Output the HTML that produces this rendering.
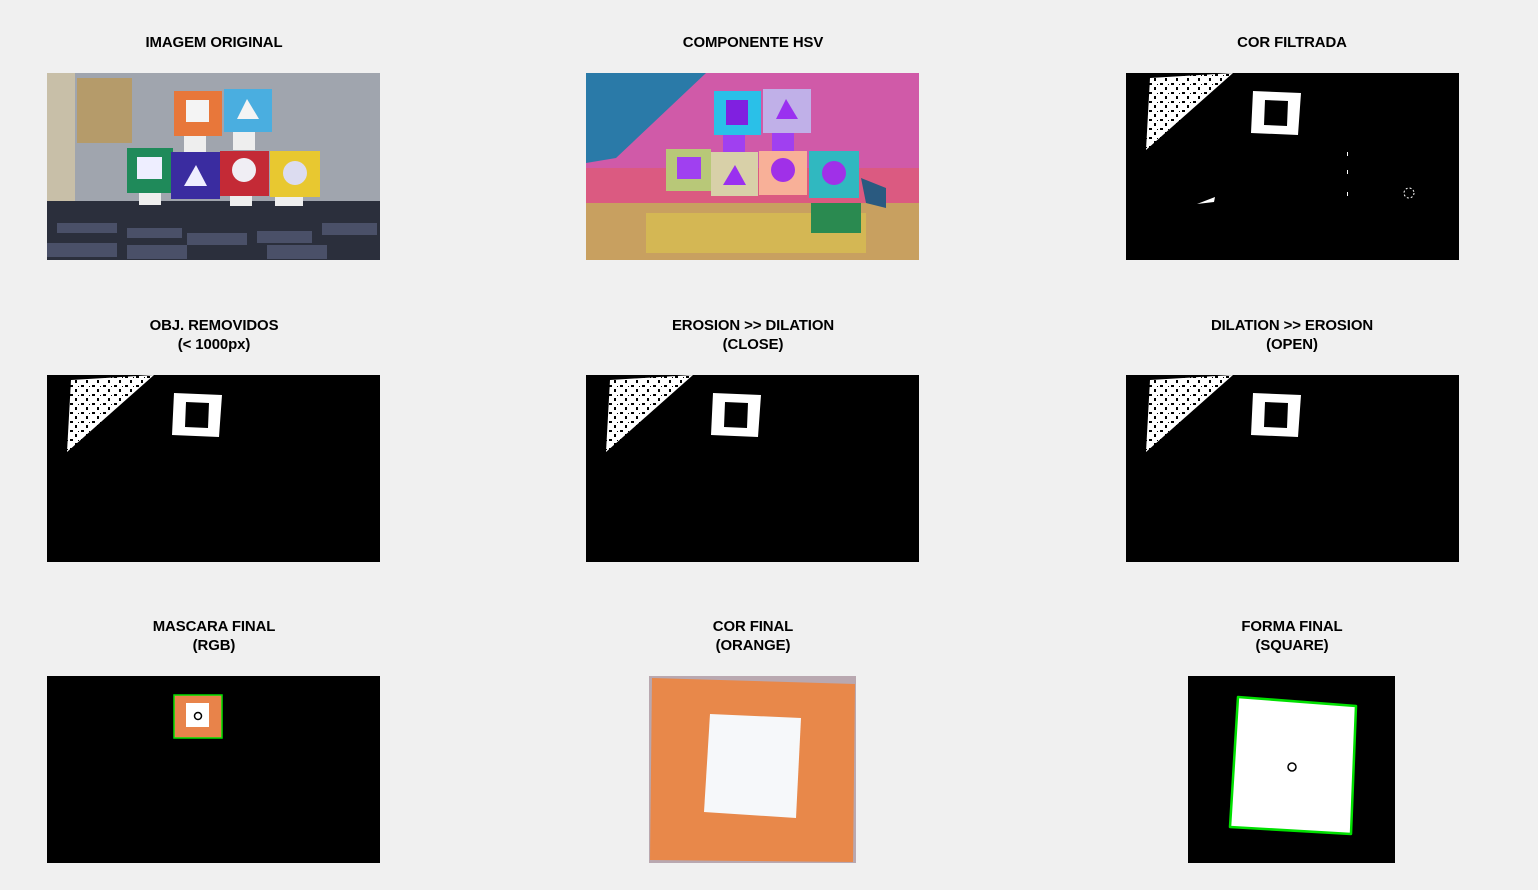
<!DOCTYPE html><html><head><meta charset="utf-8"><style>
body{margin:0;background:#f0f0f0;width:1538px;height:890px;overflow:hidden;position:relative;font-family:"Liberation Sans",Arial,sans-serif}
.t{position:absolute;width:400px;text-align:center;font-size:14.5px;font-weight:bold;color:#000;line-height:19px;letter-spacing:-0.1px;transform:scaleX(1.03)}
svg{position:absolute;left:0;top:0}
</style></head><body>
<div class="t" style="left:14px;top:34px">IMAGEM ORIGINAL</div>
<div class="t" style="left:553px;top:34px">COMPONENTE HSV</div>
<div class="t" style="left:1092px;top:34px">COR FILTRADA</div>
<div class="t" style="left:14px;top:317px">OBJ. REMOVIDOS<br>(&lt; 1000px)</div>
<div class="t" style="left:553px;top:317px">EROSION &gt;&gt; DILATION<br>(CLOSE)</div>
<div class="t" style="left:1092px;top:317px">DILATION &gt;&gt; EROSION<br>(OPEN)</div>
<div class="t" style="left:14px;top:618px">MASCARA FINAL<br>(RGB)</div>
<div class="t" style="left:553px;top:618px">COR FINAL<br>(ORANGE)</div>
<div class="t" style="left:1092px;top:618px">FORMA FINAL<br>(SQUARE)</div>
<svg width="1538" height="890">
<defs>
<pattern id="sp" width="11" height="9" patternUnits="userSpaceOnUse"><rect width="11" height="9" fill="#fff"/><rect x="1" y="1" width="3" height="2" fill="#000"/><rect x="6" y="5" width="2" height="3" fill="#000"/><rect x="9" y="2" width="1" height="1" fill="#000"/></pattern>
<g id="bin">
<rect width="333" height="187" fill="#000"/>
<polygon points="20,77 24,5 107,0" fill="url(#sp)"/>
<path d="M127,18 L175,20 L172,62 L125,60 Z M139,27 L162,28 L161,53 L138,52 Z" fill="#fff" fill-rule="evenodd"/>
</g>
</defs>
<g transform="translate(47,73)">
<rect width="333" height="187" fill="#a0a5ae"/>
<rect x="0" y="0" width="28" height="135" fill="#c8bfa8"/>
<rect x="30" y="5" width="55" height="65" fill="#b59b6a"/>
<rect x="0" y="128" width="333" height="59" fill="#2b2f3c"/>
<g fill="#4a5068"><rect x="10" y="150" width="60" height="10"/><rect x="80" y="155" width="55" height="10"/><rect x="140" y="160" width="60" height="12"/><rect x="210" y="158" width="55" height="12"/><rect x="275" y="150" width="55" height="12"/><rect x="0" y="170" width="70" height="14"/><rect x="80" y="172" width="60" height="14"/><rect x="220" y="172" width="60" height="14"/></g>
<rect x="127" y="18" width="48" height="45" fill="#e8773a"/><rect x="139" y="27" width="23" height="22" fill="#f4f4f4"/>
<rect x="177" y="16" width="48" height="43" fill="#4aaee0"/><polygon points="200,26 190,46 212,46" fill="#f4f4f4"/>
<rect x="137" y="63" width="22" height="16" fill="#eee"/><rect x="186" y="59" width="22" height="18" fill="#eee"/>
<rect x="80" y="75" width="46" height="45" fill="#1f8a5a"/><rect x="90" y="84" width="25" height="22" fill="#eef"/>
<rect x="124" y="79" width="49" height="47" fill="#3a2ca0"/><polygon points="149,92 137,113 160,113" fill="#eef"/>
<rect x="173" y="78" width="49" height="45" fill="#c42a36"/><circle cx="197" cy="97" r="12" fill="#f0eef4"/>
<rect x="223" y="78" width="50" height="46" fill="#e8c830"/><circle cx="248" cy="100" r="12" fill="#dcdcf0"/>
<rect x="92" y="120" width="22" height="12" fill="#eee"/><rect x="183" y="123" width="22" height="10" fill="#eee"/><rect x="228" y="124" width="28" height="9" fill="#eee"/>
</g>
<g transform="translate(586,73)">
<rect width="333" height="187" fill="#d05aa8"/>
<polygon points="0,0 120,0 30,85 0,90" fill="#2a7aa8"/>
<rect x="0" y="95" width="333" height="40" fill="#e05a70" opacity=".7"/>
<rect x="0" y="130" width="333" height="57" fill="#c8a060"/>
<rect x="60" y="140" width="220" height="40" fill="#d8c050" opacity=".7"/>
<rect x="225" y="130" width="50" height="30" fill="#2a8a50"/>
<rect x="128" y="18" width="47" height="44" fill="#2ac0e8"/><rect x="140" y="27" width="22" height="25" fill="#8020e0"/>
<rect x="177" y="16" width="48" height="44" fill="#c0b0e8"/><polygon points="200,26 190,46 212,46" fill="#9a30f0"/>
<rect x="137" y="62" width="22" height="17" fill="#a040f0"/><rect x="186" y="60" width="22" height="18" fill="#a040f0"/>
<rect x="80" y="76" width="45" height="42" fill="#b8c878"/><rect x="91" y="84" width="24" height="22" fill="#a040f0"/>
<rect x="125" y="79" width="47" height="44" fill="#d8d0a8"/><polygon points="149,92 137,112 160,112" fill="#9a30f0"/>
<rect x="173" y="78" width="48" height="44" fill="#f8b098"/><circle cx="197" cy="97" r="12" fill="#a030e8"/>
<rect x="223" y="78" width="50" height="47" fill="#30b8c0"/><circle cx="248" cy="100" r="12" fill="#a030e8"/>
<polygon points="275,105 300,115 300,135 280,130" fill="#2a5a80"/>
</g>
<use href="#bin" x="1126" y="73"/>
<g fill="#fff"><polygon points="1197,204 1215,197 1214,202"/><rect x="1347" y="152" width="1" height="4"/><rect x="1347" y="170" width="1" height="4"/><rect x="1347" y="192" width="1" height="4"/><circle cx="1409" cy="193" r="5" fill="none" stroke="#fff" stroke-width="1" stroke-dasharray="2 2"/></g>
<use href="#bin" x="47" y="375"/>
<use href="#bin" x="586" y="375"/>
<use href="#bin" x="1126" y="375"/>
<rect x="47" y="676" width="333" height="187" fill="#000"/>
<rect x="174" y="695" width="48" height="43" fill="#e8834a" stroke="#00e000" stroke-width="1.5"/>
<rect x="186" y="703" width="23" height="24" fill="#fff"/>
<circle cx="198" cy="716" r="3.5" fill="none" stroke="#000" stroke-width="1.5"/>
<rect x="649" y="676" width="207" height="187" fill="#b9a8b0"/>
<polygon points="652,678 855,684 853,862 650,860" fill="#e8884a"/>
<polygon points="710,714 801,718 796,818 704,812" fill="#f6f8fa"/>
<rect x="1188" y="676" width="207" height="187" fill="#000"/>
<polygon points="1238,697 1356,706 1351,834 1230,827" fill="#fff" stroke="#00e000" stroke-width="2.5" stroke-linejoin="round"/>
<circle cx="1292" cy="767" r="4" fill="none" stroke="#000" stroke-width="1.5"/>
</svg>
</body></html>
